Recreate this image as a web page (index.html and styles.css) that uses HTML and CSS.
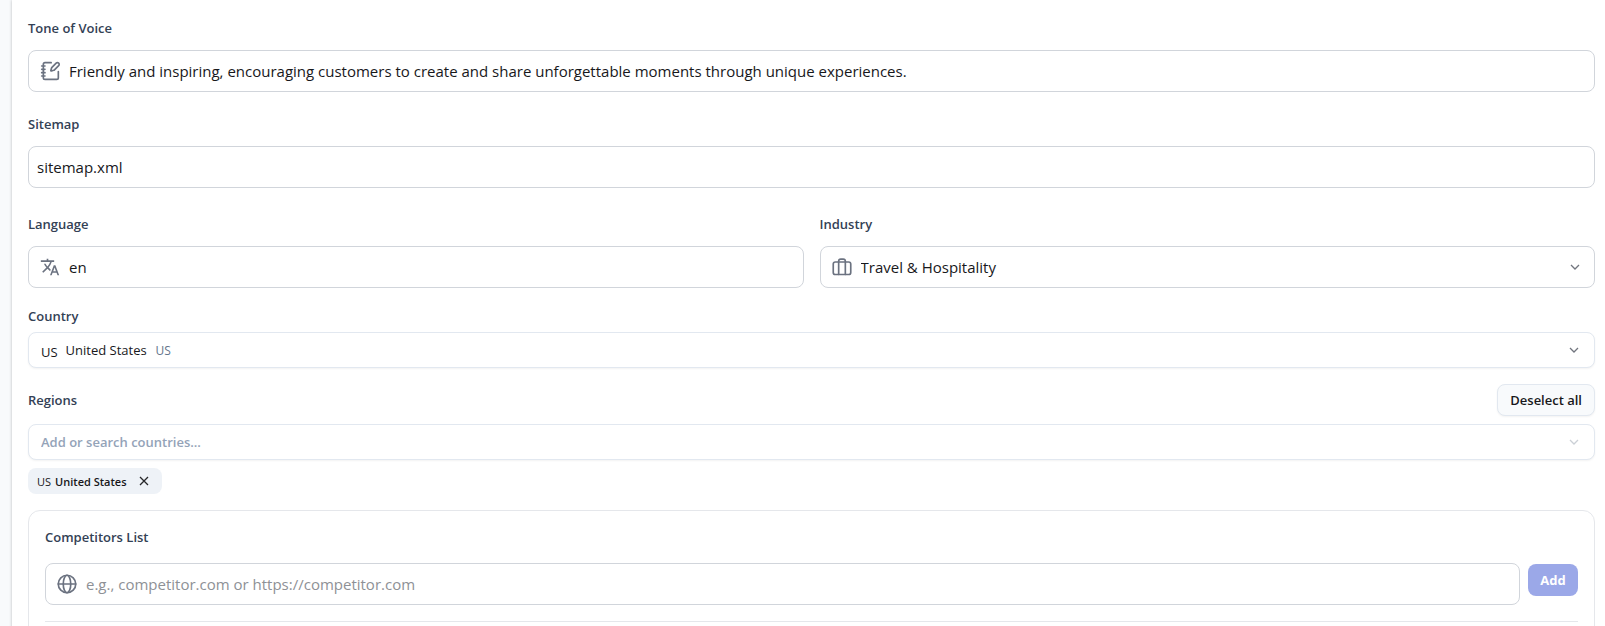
FILE: index.html
```html
<!DOCTYPE html>
<html lang="en">
<head>
  <meta charset="UTF-8">
  <meta name="viewport" content="width=device-width, initial-scale=1.0">
  <title>Brand Settings</title>
  <link rel="stylesheet" href="styles.css">
</head>
<body>

  <main class="panel">
    <form class="settings">

      <!-- Tone of voice -->
      <div class="field">
        <label for="tone">Tone of Voice</label>
        <div class="control">
          <svg class="icon" viewBox="0 0 24 24"><path d="M13.4 2H6a2 2 0 0 0-2 2v16a2 2 0 0 0 2 2h14a2 2 0 0 0 2-2v-7.4"/><path d="M2 6h4M2 10h4M2 14h4M2 18h4"/><path d="M22.378 5.626a1 1 0 1 0-3.004-3.004l-5.01 5.012a2 2 0 0 0-.506.854l-.837 2.87a.5.5 0 0 0 .62.62l2.870-.837a2 2 0 0 0 .854-.506z"/></svg>
          <input type="text" id="tone" value="Friendly and inspiring, encouraging customers to create and share unforgettable moments through unique experiences.">
        </div>
      </div>

      <!-- Sitemap -->
      <div class="field">
        <label for="sitemap">Sitemap</label>
        <div class="control plain">
          <input type="text" id="sitemap" value="sitemap.xml">
        </div>
      </div>

      <!-- Language and industry -->
      <div class="row">
        <div class="field">
          <label for="language">Language</label>
          <div class="control">
            <svg class="icon solid" viewBox="0 0 24 24"><path d="M12.87 15.07l-2.54-2.51.03-.03A17.52 17.52 0 0 0 14.07 6H17V4h-7V2H8v2H1v2h11.17C11.5 7.92 10.44 9.75 9 11.35 8.07 10.32 7.3 9.19 6.69 8h-2c.73 1.63 1.73 3.17 2.98 4.56l-5.09 5.02L4 19l5-5 3.11 3.11.76-2.04zM18.5 10h-2L12 22h2l1.12-3h4.75L21 22h2l-4.5-12zm-2.62 7l1.62-4.33L19.12 17h-3.24z"/></svg>
            <input type="text" id="language" value="en">
          </div>
        </div>
        <div class="field">
          <label for="industry">Industry</label>
          <div class="control">
            <svg class="icon" viewBox="0 0 24 24"><rect x="1.5" y="6" width="21" height="15" rx="2.5"/><path d="M8 21V5a2.5 2.5 0 0 1 2.5-2.5h3A2.5 2.5 0 0 1 16 5v16"/></svg>
            <select id="industry">
              <option>Travel &amp; Hospitality</option>
            </select>
            <svg class="chevron" viewBox="0 0 16 16"><path d="M4 6l4 4 4-4"/></svg>
          </div>
        </div>
      </div>

      <!-- Country -->
      <div class="field tight">
        <label for="country">Country</label>
        <div class="control small">
          <span class="flag">US</span>
          <select id="country" class="fit">
            <option>United States</option>
          </select>
          <span class="code">US</span>
          <svg class="chevron" viewBox="0 0 16 16"><path d="M4 6l4 4 4-4"/></svg>
        </div>
      </div>

      <!-- Regions -->
      <div class="regions">
        <div class="regions-head">
          <label for="regions">Regions</label>
          <button type="button" class="btn-outline">Deselect all</button>
        </div>
        <div class="control small">
          <input type="text" id="regions" class="search" placeholder="Add or search countries...">
          <svg class="chevron faded" viewBox="0 0 16 16"><path d="M4 6l4 4 4-4"/></svg>
        </div>
        <div class="chips">
          <span class="chip">
            <span class="chip-flag">US</span>
            <span>United States</span>
            <button type="button" class="chip-remove" aria-label="Remove United States">
              <svg viewBox="0 0 12 12"><path d="M2 2l8 8M10 2l-8 8"/></svg>
            </button>
          </span>
        </div>
      </div>

      <!-- Competitors -->
      <section class="card">
        <label for="competitor">Competitors List</label>
        <div class="add-row">
          <div class="control">
            <svg class="icon" viewBox="0 0 24 24"><circle cx="12" cy="12" r="10.5"/><ellipse cx="12" cy="12" rx="4.5" ry="10.5"/><path d="M1.5 12h21"/></svg>
            <input type="text" id="competitor" placeholder="e.g., competitor.com or https://competitor.com">
          </div>
          <button type="button" class="btn-add" disabled>Add</button>
        </div>
        <hr>
      </section>

    </form>
  </main>

</body>
</html>
```
FILE: styles.css
```css
* {
  box-sizing: border-box;
}

body {
  margin: 0;
  background-color: #f8fafc;
  color: #18181b;
  font-family: "Segoe UI", "Open Sans", sans-serif;
  font-size: 15px;
  overflow: hidden;
}

.panel {
  min-height: 100vh;
  margin-left: 12px;
  padding: 18px 10px 0 16px;
  background-color: #fff;
  box-shadow: 0 0 3px rgba(0, 0, 0, 0.25);
}

.settings {
  display: flex;
  flex-direction: column;
}

/* Fields */
.field {
  display: flex;
  flex-direction: column;
  gap: 12px;
  margin-bottom: 22px;
}

label {
  color: #334155;
  font-size: 13px;
  font-weight: 600;
  line-height: 20px;
}

.row {
  display: grid;
  grid-template-columns: 1fr 1fr;
  gap: 16px;
  padding-top: 4px;
}

.row .field {
  margin-bottom: 18px;
}

.field.tight {
  gap: 6px;
  margin-bottom: 16px;
}

.control {
  display: flex;
  align-items: center;
  gap: 9px;
  height: 42px;
  padding: 0 11px;
  border: 1px solid #d1d5db;
  border-radius: 8px;
  background-color: #fff;
}

.control.plain {
  padding: 0 8px;
}

.control.small {
  gap: 8px;
  height: 36px;
  padding: 0 12px;
  border-color: #e2e8f0;
  font-size: 13px;
  box-shadow: 0 1px 2px rgba(0, 0, 0, 0.05);
}

.control input,
.control select {
  flex: 1;
  min-width: 0;
  padding: 0;
  border: none;
  outline: none;
  background: none;
  color: inherit;
  font: inherit;
  appearance: none;
}

.control select.fit {
  flex: none;
}

.control input::placeholder {
  color: #8e9196;
}

.control input.search {
  font-weight: 600;
}

.control input.search::placeholder {
  color: #94a3b8;
}

.flag {
  padding-top: 3px;
}

.code {
  color: #64748b;
  font-size: 12px;
}

/* Icons */
.icon {
  flex: none;
  width: 20px;
  height: 20px;
  fill: none;
  stroke: #6b7280;
  stroke-width: 2;
  stroke-linecap: round;
  stroke-linejoin: round;
}

.icon.solid {
  fill: #6b7280;
  stroke: none;
}

.chevron {
  flex: none;
  width: 16px;
  height: 16px;
  margin-left: auto;
  fill: none;
  stroke: #71757e;
  stroke-width: 1.3;
}

.chevron.faded {
  stroke: #cbd0d6;
}

/* Regions */
.regions {
  display: flex;
  flex-direction: column;
  gap: 8px;
  margin-bottom: 16px;
}

.regions-head {
  display: flex;
  align-items: center;
  justify-content: space-between;
}

.btn-outline {
  height: 32px;
  padding: 0 12px;
  border: 1px solid #e2e8f0;
  border-radius: 8px;
  background-color: #f8fafc;
  box-shadow: 0 1px 2px rgba(0, 0, 0, 0.05);
  color: #18181b;
  font: inherit;
  font-size: 13px;
  font-weight: 600;
  cursor: pointer;
}

.chips {
  display: flex;
  gap: 8px;
}

.chip {
  display: flex;
  align-items: center;
  gap: 4px;
  height: 26px;
  padding: 0 10px 0 9px;
  border-radius: 8px;
  background-color: #eef2f7;
  font-size: 11px;
  font-weight: 600;
}

.chip-flag {
  font-weight: 400;
}

.chip-remove {
  display: flex;
  margin-left: 5px;
  padding: 2px;
  border: none;
  background: none;
  cursor: pointer;
}

.chip-remove svg {
  width: 12px;
  height: 12px;
  fill: none;
  stroke: #27272a;
  stroke-width: 1.3;
}

/* Competitors */
.card {
  display: flex;
  flex-direction: column;
  gap: 16px;
  padding: 16px;
  border: 1px solid #e5e7eb;
  border-radius: 12px;
}

.add-row {
  display: flex;
  align-items: flex-start;
  gap: 8px;
}

.add-row .control {
  flex: 1;
}

.btn-add {
  min-width: 50px;
  height: 32px;
  margin-top: 1px;
  padding: 0 12px;
  border: none;
  border-radius: 8px;
  background-color: #9ba8e8;
  color: #fff;
  font: inherit;
  font-size: 13px;
  font-weight: 700;
}

hr {
  width: 100%;
  margin: 0;
  border: none;
  border-top: 1px solid #e5e7eb;
}
```
